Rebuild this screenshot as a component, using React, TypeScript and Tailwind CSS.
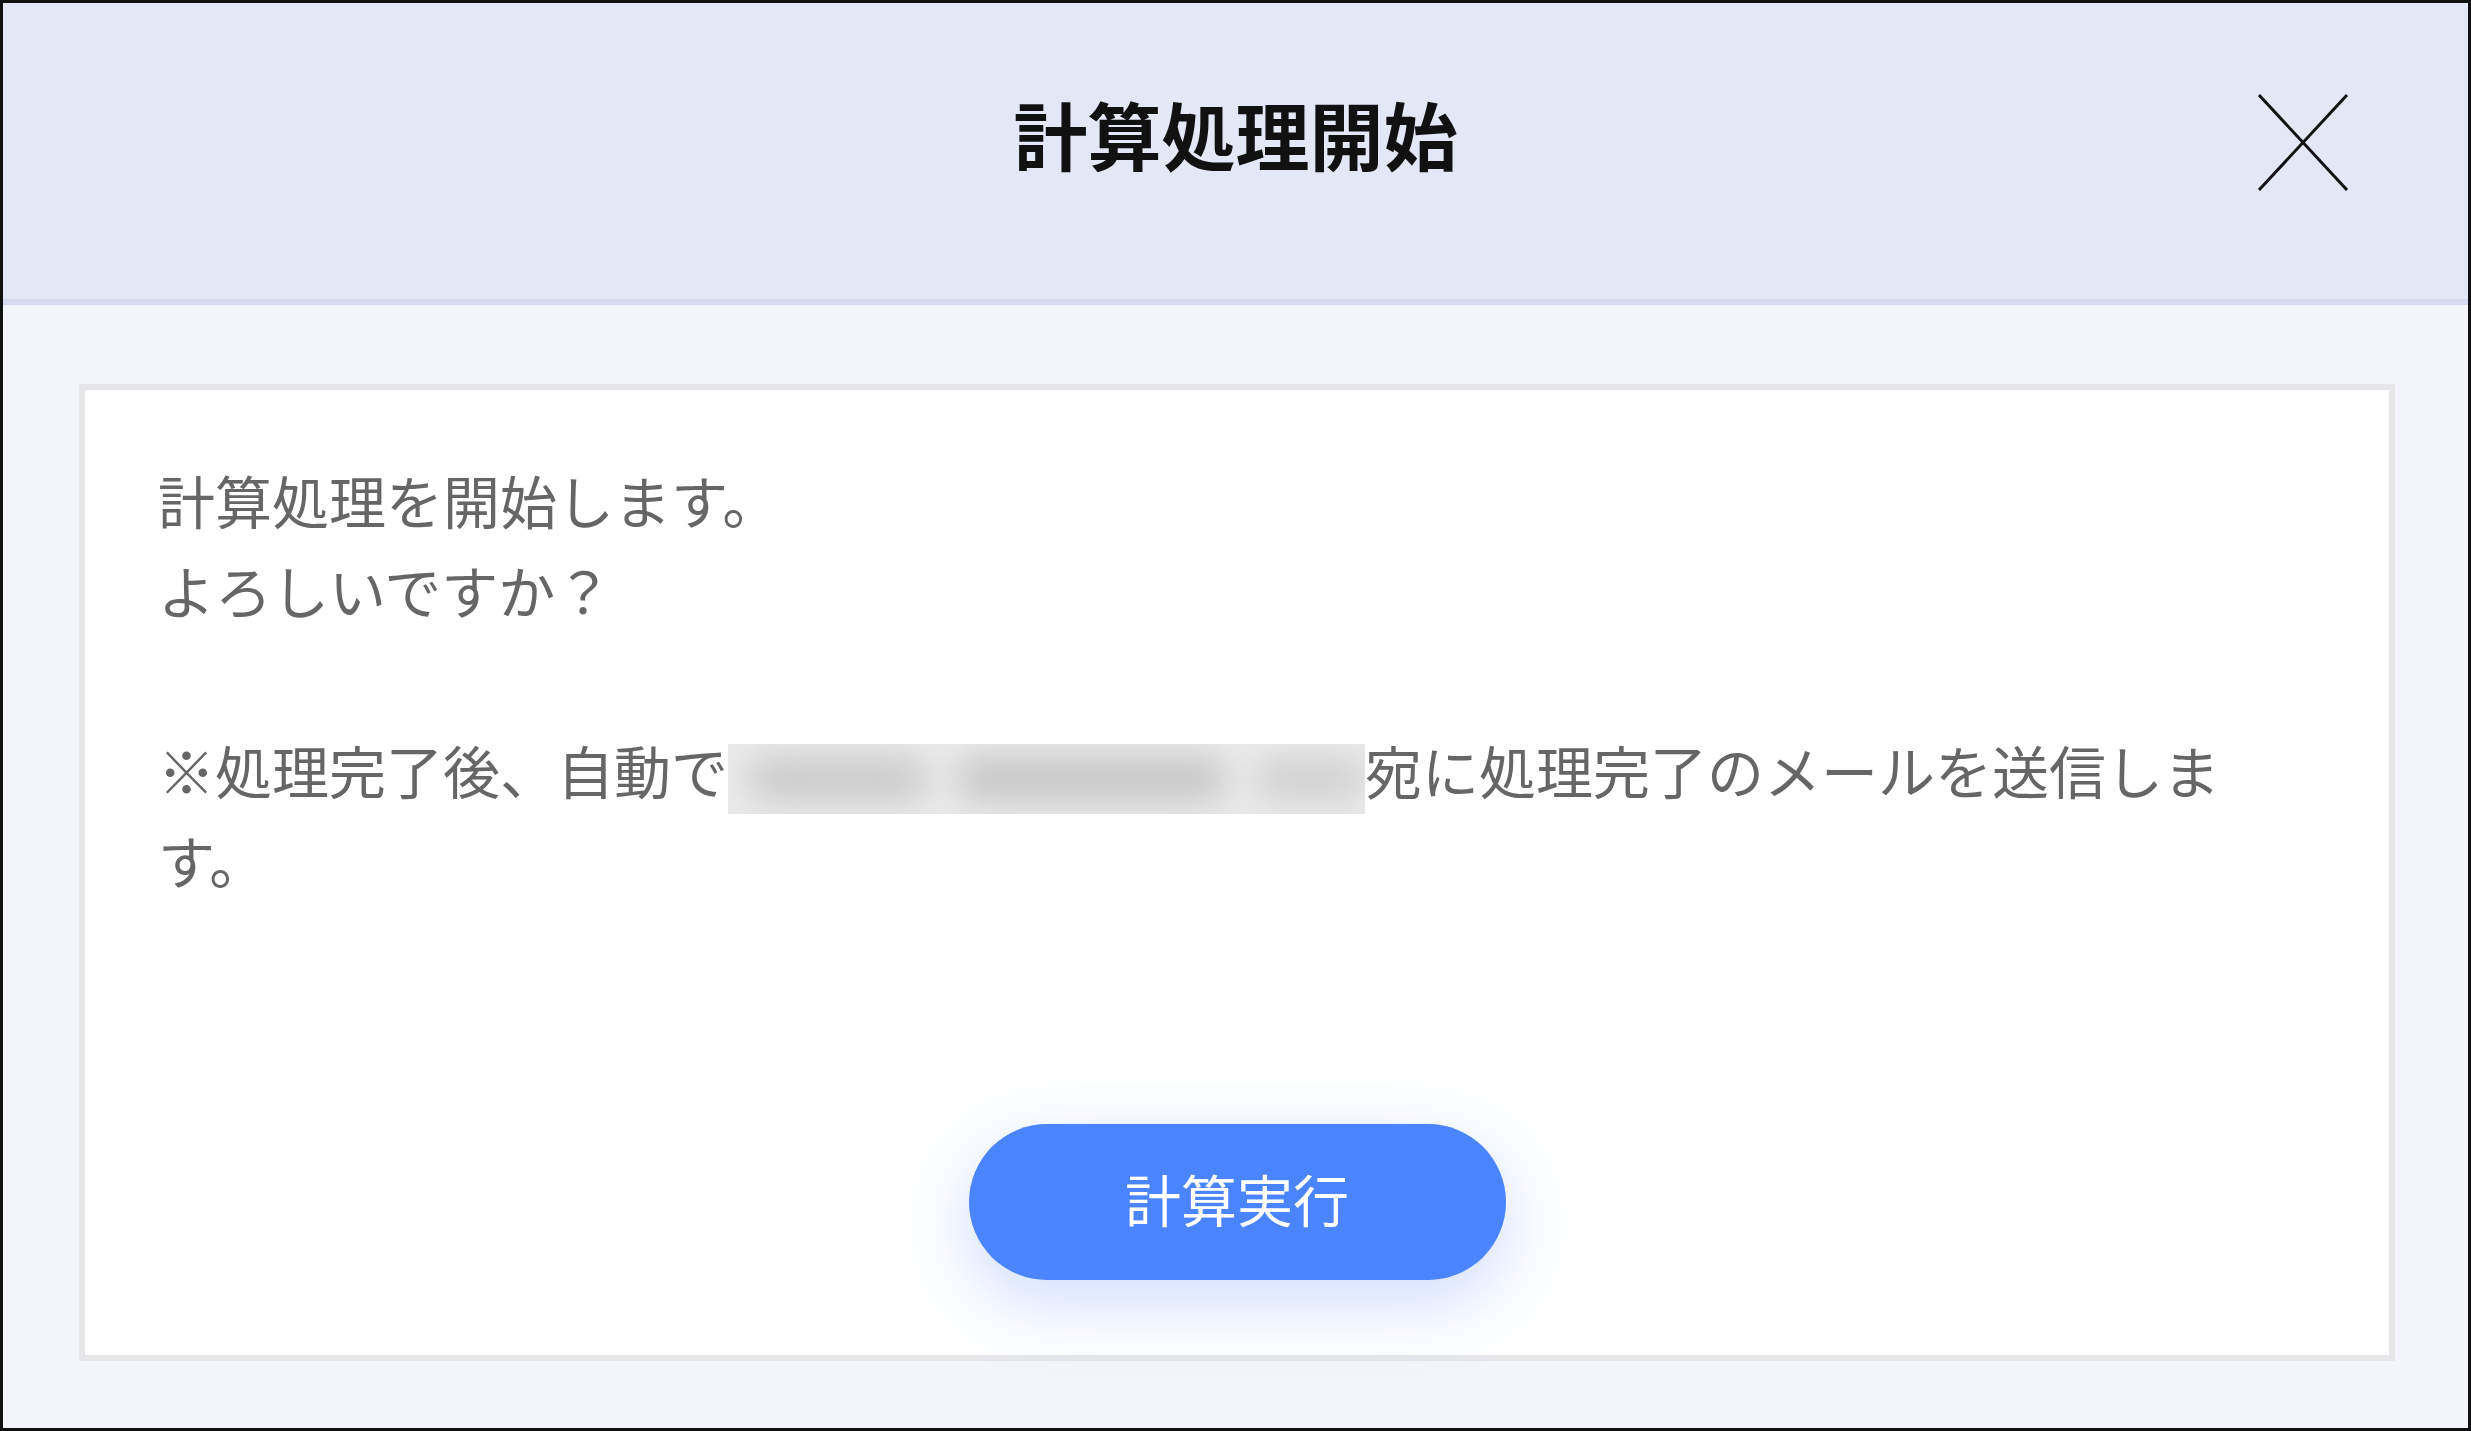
import React from "react";

export default function App() {
  return (
    <div
      className="w-[2471px] h-[1431px] border-[3px] border-[#111] bg-[#f4f5fa] flex flex-col"
      style={{ fontFamily: '"Noto Sans CJK JP", "Noto Sans", sans-serif' }}
    >
      {/* Header */}
      <div className="h-[302px] shrink-0 bg-[#e4e8f6] border-b-[6px] border-[#d6daf1] grid grid-cols-[1fr_auto_1fr]">
        <div />
        <div className="pt-[93px]">
          <h1 className="text-[74px] leading-[74px] font-bold text-[#111]">計算処理開始</h1>
        </div>
        <div className="flex justify-end items-start pt-[90px] pr-[119px]">
          <button aria-label="close" className="w-[92px] h-[99px] flex items-center justify-center">
            <svg width="92" height="99" viewBox="0 0 92 99" fill="none">
              <path d="M2 2 L90 97" stroke="#111" strokeWidth="3" />
              <path d="M90 2 L2 97" stroke="#111" strokeWidth="3" />
            </svg>
          </button>
        </div>
      </div>

      {/* Body */}
      <div className="flex-1 pt-[79px] pb-[67px] pl-[76px] pr-[73px] flex">
        <div className="flex-1 bg-white border-[6px] border-[#e7e7ea] pt-[64px] px-[73px] pb-[75px] flex flex-col">
          <div className="text-[57px] leading-[90px] text-[#666666] pr-[60px]">
            <p>計算処理を開始します。</p>
            <p>よろしいですか？</p>
            <p>&nbsp;</p>
            <p>
              ※処理完了後、自動で
              <span className="inline-block w-[637px] h-[70px] overflow-hidden align-[-20px] bg-[#eaeaea]">
                <span className="flex items-center h-full gap-[30px] pl-[20px] blur-[16px]">
                  <span className="block w-[180px] h-[44px] rounded-full bg-[#cbcbcb]" />
                  <span className="block w-[270px] h-[46px] rounded-full bg-[#c8c8c8]" />
                  <span className="block w-[110px] h-[40px] rounded-full bg-[#d0d0d0]" />
                </span>
              </span>
              宛に処理完了のメールを送信します。
            </p>
          </div>
          <div className="flex-1" />
          <div className="flex justify-center">
            <button className="w-[537px] h-[156px] rounded-full bg-[#4b84ff] text-white text-[56px] leading-none flex items-center justify-center pb-[8px] shadow-[0_22px_70px_rgba(75,132,255,0.28)]">
              計算実行
            </button>
          </div>
        </div>
      </div>
    </div>
  );
}
